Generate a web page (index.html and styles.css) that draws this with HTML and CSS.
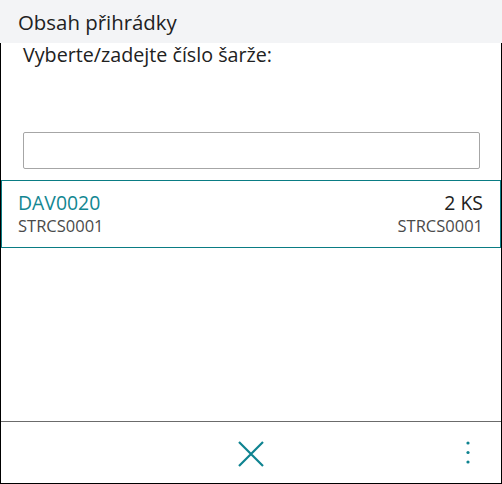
FILE: index.html
```html
<!DOCTYPE html>
<html lang="cs">
<head>
    <meta charset="UTF-8">
    <meta name="viewport" content="width=device-width, initial-scale=1.0">
    <title>Obsah přihrádky</title>
    <link rel="stylesheet" href="styles.css">
</head>
<body>

    <div class="app">
        <div class="header">Obsah přihrádky</div>

        <div class="main">
            <div class="label">Vyberte/zadejte číslo šarže:</div>
            <input type="text" class="lot-input">

            <div class="item">
                <div class="row">
                    <span class="lot">DAV0020</span>
                    <span class="qty">2 KS</span>
                </div>
                <div class="row sub">
                    <span>STRCS0001</span>
                    <span>STRCS0001</span>
                </div>
            </div>

            <div class="footer">
                <button class="icon-btn close-btn" title="Zavřít">
                    <svg width="28" height="28" viewBox="0 0 28 28">
                        <path d="M2 2 L26 26 M26 2 L2 26" stroke="#0e8390" stroke-width="2.2" fill="none"/>
                    </svg>
                </button>
                <button class="icon-btn more-btn" title="Další">
                    <svg width="6" height="24" viewBox="0 0 6 24">
                        <circle cx="3" cy="3" r="1.6" fill="#0e8390"/>
                        <circle cx="3" cy="12.5" r="1.6" fill="#0e8390"/>
                        <circle cx="3" cy="22" r="1.6" fill="#0e8390"/>
                    </svg>
                </button>
            </div>
        </div>
    </div>

</body>
</html>
```

FILE: styles.css
```css
body {
    margin: 0;
    font-family: "Open Sans", "Noto Sans", sans-serif;
    color: #212121;
    background: #fff;
}
.app {
    width: 502px;
    height: 484px;
    display: flex;
    flex-direction: column;
}
.header {
    height: 43px;
    box-sizing: border-box;
    padding: 2px 0 0 18px;
    line-height: 41px;
    background-color: #f3f4f6;
    font-size: 20.4px;
}
.main {
    flex: 1;
    display: flex;
    flex-direction: column;
    border: 1px solid #000;
    border-top: none;
}
.label {
    margin-top: 1px;
    padding-left: 22px;
    font-size: 19.7px;
    line-height: 22px;
}
.lot-input {
    box-sizing: border-box;
    margin: 66px 21px 0 22px;
    height: 37px;
    border: 1px solid #a6a6a6;
    border-radius: 2px;
    font: inherit;
    font-size: 18px;
    padding: 0 8px;
}
.item {
    margin-top: 11px;
    border: 1px solid #0a7c84;
    padding: 10px 17px 10px 16px;
}
.row {
    display: flex;
    justify-content: space-between;
    font-size: 19.4px;
    line-height: 24px;
}
.row.sub {
    font-size: 16.5px;
    line-height: 22px;
    color: #4a4a4a;
}
.lot {
    color: #138792;
}
.footer {
    margin-top: auto;
    height: 61px;
    border-top: 1px solid #6b6b6b;
    display: flex;
    align-items: center;
    justify-content: center;
    position: relative;
}
.icon-btn {
    background: none;
    border: none;
    padding: 0;
    cursor: pointer;
    display: flex;
}
.close-btn {
    margin-top: 3px;
}
.more-btn {
    position: absolute;
    right: 30px;
    top: 18px;
}
```
